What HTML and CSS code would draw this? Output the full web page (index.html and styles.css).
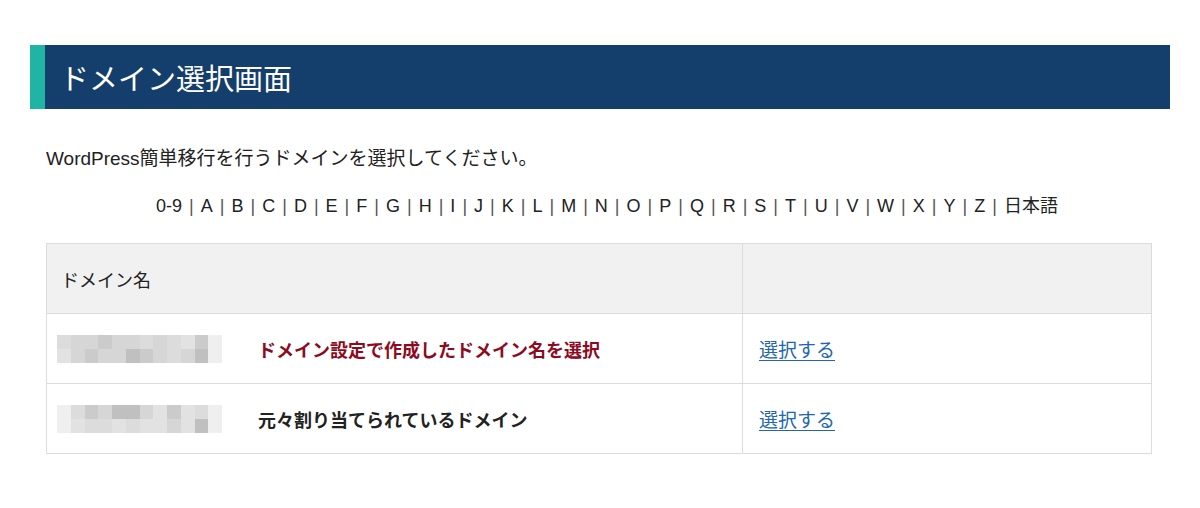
FILE: index.html
```html
<!DOCTYPE html>
<html lang="ja">
<head>
<meta charset="utf-8">
<title>ドメイン選択画面</title>
<link rel="stylesheet" href="styles.css">
</head>
<body>
<div class="page">
  <h1 class="title">ドメイン選択画面</h1>
  <div class="content">
    <p class="lead">WordPress簡単移行を行うドメインを選択してください。</p>
    <div class="index">
      <a>0-9</a><span class="sep">|</span><a>A</a><span class="sep">|</span><a>B</a><span class="sep">|</span><a>C</a><span class="sep">|</span><a>D</a><span class="sep">|</span><a>E</a><span class="sep">|</span><a>F</a><span class="sep">|</span><a>G</a><span class="sep">|</span><a>H</a><span class="sep">|</span><a>I</a><span class="sep">|</span><a>J</a><span class="sep">|</span><a>K</a><span class="sep">|</span><a>L</a><span class="sep">|</span><a>M</a><span class="sep">|</span><a>N</a><span class="sep">|</span><a>O</a><span class="sep">|</span><a>P</a><span class="sep">|</span><a>Q</a><span class="sep">|</span><a>R</a><span class="sep">|</span><a>S</a><span class="sep">|</span><a>T</a><span class="sep">|</span><a>U</a><span class="sep">|</span><a>V</a><span class="sep">|</span><a>W</a><span class="sep">|</span><a>X</a><span class="sep">|</span><a>Y</a><span class="sep">|</span><a>Z</a><span class="sep">|</span><a>日本語</a>
    </div>
    <table class="domains">
      <thead>
        <tr><th class="c-name">ドメイン名</th><th class="c-act"></th></tr>
      </thead>
      <tbody>
        <tr>
          <td class="c-name">
            <div class="cell">
              <div class="mosaic">
                <i class="g3"></i><i class="g4"></i><i class="g4"></i><i class="g5"></i><i class="g4"></i><i class="g4"></i><i class="g3"></i><i class="g4"></i><i class="g3"></i><i class="g2"></i><i class="g5"></i><i class="g1"></i>
                <i class="g2"></i><i class="g4"></i><i class="g5"></i><i class="g4"></i><i class="g4"></i><i class="g6"></i><i class="g5"></i><i class="g4"></i><i class="g3"></i><i class="g4"></i><i class="g6"></i><i class="g1"></i>
              </div>
              <span class="note red">ドメイン設定で作成したドメイン名を選択</span>
            </div>
          </td>
          <td class="c-act"><a class="pick" href="#">選択する</a></td>
        </tr>
        <tr>
          <td class="c-name">
            <div class="cell">
              <div class="mosaic">
                <i class="g1"></i><i class="g3"></i><i class="g5"></i><i class="g4"></i><i class="g6"></i><i class="g6"></i><i class="g4"></i><i class="g2"></i><i class="g5"></i><i class="g2"></i><i class="g3"></i><i class="g1"></i>
                <i class="g1"></i><i class="g2"></i><i class="g3"></i><i class="g3"></i><i class="g2"></i><i class="g3"></i><i class="g2"></i><i class="g2"></i><i class="g4"></i><i class="g2"></i><i class="g6"></i><i class="g1"></i>
              </div>
              <span class="note">元々割り当てられているドメイン</span>
            </div>
          </td>
          <td class="c-act"><a class="pick" href="#">選択する</a></td>
        </tr>
      </tbody>
    </table>
  </div>
</div>
</body>
</html>
```

FILE: styles.css
```css
* { box-sizing: border-box; }
html, body { margin: 0; padding: 0; background: #ffffff; }
body {
  font-family: "Liberation Sans", "Noto Sans CJK JP", sans-serif;
  color: #222222;
  font-size: 18px;
}
.page { padding: 45px 30px 0 30px; }
.title {
  margin: 0;
  height: 64px;
  display: flex;
  align-items: center;
  background: #143e6b;
  border-left: 15px solid #1fb4a3;
  padding-left: 15px;
  color: #ffffff;
  font-family: "Noto Sans CJK JP", sans-serif;
  font-weight: 400;
  font-size: 29px;
  letter-spacing: 0;
}
.content { padding: 0 18px 0 16px; }
.lead {
  margin: 36px 0 0 0;
  line-height: 27px;
  font-size: 19px;
}
.index {
  margin-top: 21px;
  display: flex;
  justify-content: center;
  gap: 7px;
  line-height: 27px;
  font-size: 18px;
  padding-left: 16px;
  color: #222222;
}
.index a { color: #222222; }
.index .sep { color: #555555; }
.domains {
  margin-top: 23px;
  width: 100%;
  border-collapse: collapse;
  border: 1px solid #dcdcdc;
  font-family: "Liberation Sans", "Noto Sans CJK JP", sans-serif;
}
.domains th, .domains td {
  border: 1px solid #dcdcdc;
  text-align: left;
  vertical-align: middle;
}
.domains th {
  background: #f1f1f1;
  height: 70px;
  padding: 0 14px;
  font-weight: 400;
  font-size: 18px;
  color: #222222;
}
.domains td { height: 70px; padding: 0 16px 0 10px; }
.domains .c-name { width: 696px; }
.domains th.c-name { padding-left: 14px; }
.domains td.c-act { padding-left: 16px; }
.cell { display: flex; align-items: center; gap: 36px; }
.mosaic {
  display: grid;
  grid-template-columns: repeat(12, 13.75px);
  grid-template-rows: 14px 14px;
  flex: none;
}
.mosaic i { display: block; }
.g1 { background: #efefef; }
.g2 { background: #e2e2e2; }
.g3 { background: #dcdcdc; }
.g4 { background: #d6d6d6; }
.g5 { background: #cbcbcb; }
.g6 { background: #c0c0c0; }
.note {
  font-weight: 700;
  font-size: 18px;
  color: #222222;
}
.note.red { color: #8d0b22; }
.pick {
  color: #2166ae;
  font-size: 19px;
  text-decoration: underline;
  text-underline-offset: 3px;
}
```
